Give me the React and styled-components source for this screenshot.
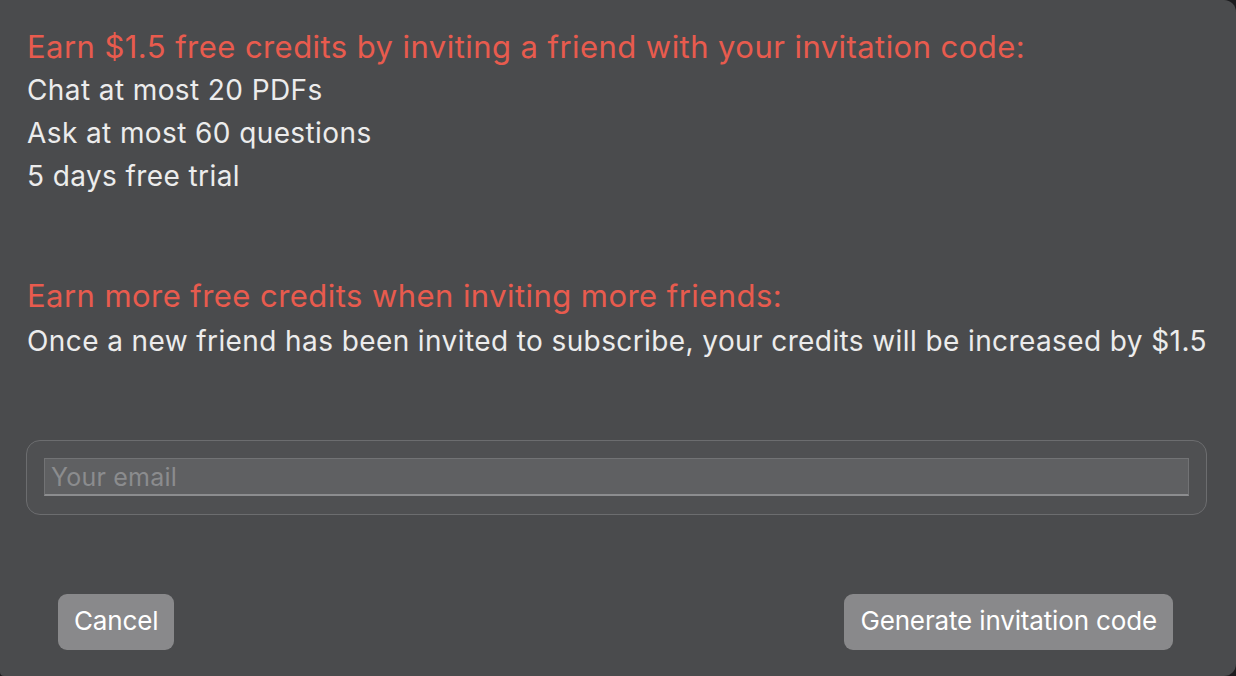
import styled, { createGlobalStyle } from 'styled-components';

const GlobalStyle = createGlobalStyle`
  html, body {
    margin: 0;
    padding: 0;
    background: #1c1c1e;
  }

  body {
    font-family: Inter, "Noto Sans", "Liberation Sans", sans-serif;
    -webkit-font-smoothing: antialiased;
  }
`;

export default function App() {
  return (
    <Sheet>
      <GlobalStyle />

      <Section>
        <Heading>Earn $1.5 free credits by inviting a friend with your invitation code:</Heading>
        <Line>Chat at most 20 PDFs</Line>
        <Line>Ask at most 60 questions</Line>
        <Line>5 days free trial</Line>
      </Section>

      <Section $top={76}>
        <Heading>Earn more free credits when inviting more friends:</Heading>
        <Line $offset={2}>Once a new friend has been invited to subscribe, your credits will be increased by $1.5</Line>
      </Section>

      <FieldBox>
        <EmailInput type="email" placeholder="Your email" />
      </FieldBox>

      <Actions>
        <Button type="button">Cancel</Button>
        <Button type="submit">Generate invitation code</Button>
      </Actions>
    </Sheet>
  );
}

const Sheet = styled.div`
  box-sizing: border-box;
  width: 1236px;
  height: 676px;
  display: flex;
  flex-direction: column;
  padding: 25px 0 0 27px;
  background: #4a4b4d;
  border-radius: 0 12px 12px 4px;
  overflow: hidden;
`;

const Section = styled.section`
  display: flex;
  flex-direction: column;
  margin-top: ${(p) => p.$top || 0}px;
`;

const Heading = styled.span`
  font-size: 31px;
  line-height: 44px;
  color: #e85b4e;
  letter-spacing: 0.44px;
`;

const Line = styled.span`
  font-size: 28px;
  line-height: 43px;
  margin-top: ${(p) => p.$offset || 0}px;
  color: #ececec;
  letter-spacing: 0.4px;
`;

const FieldBox = styled.div`
  box-sizing: border-box;
  width: 1181px;
  height: 75px;
  margin: 77px 0 0 -1px;
  padding: 17px;
  border: 1.5px solid #6c6d6f;
  border-radius: 14px;
  background: #4f5052;
`;

const EmailInput = styled.input`
  box-sizing: border-box;
  display: block;
  width: 100%;
  height: 38px;
  margin: 0;
  padding: 0 6px;
  border: 1px solid #727375;
  border-bottom: 2px solid #8c8d8f;
  background: #5f6062;
  color: #ececec;
  font-family: inherit;
  font-size: 25px;
  letter-spacing: 0.2px;
  outline: none;

  &::placeholder {
    color: #8b8c8e;
  }
`;

const Actions = styled.div`
  display: flex;
  justify-content: space-between;
  align-items: center;
  margin: 79px 63px 0 31px;
`;

const Button = styled.button`
  height: 56px;
  padding: 0 16px 3px;
  border: none;
  border-radius: 9px;
  background: #89898b;
  color: #ffffff;
  font-family: inherit;
  font-size: 26px;
  letter-spacing: -0.15px;
  cursor: pointer;
`;
